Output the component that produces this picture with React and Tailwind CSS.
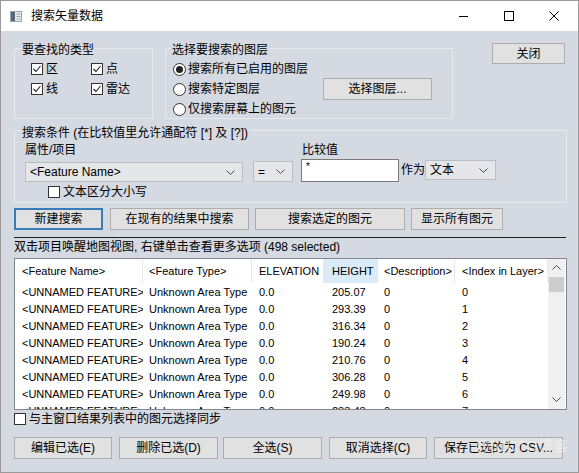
import React from 'react';

const bodyBg = 'bg-[#d4d9e2]';

const rows = [
  ['205.07', '0'],
  ['293.39', '1'],
  ['316.34', '2'],
  ['190.24', '3'],
  ['210.76', '4'],
  ['306.28', '5'],
  ['249.98', '6'],
  ['283.48', '7'],
];

const colW = ['w-[128px]', 'w-[109px]', 'w-[72px]', 'w-[54px]', 'w-[77px]', 'w-[93px]'];
const colPad = ['pl-[7px]', 'pl-[6px]', 'pl-[7px]', 'pl-[8px]', 'pl-[6px]', 'pl-[7px]'];
const headers = ['<Feature Name>', '<Feature Type>', 'ELEVATION', 'HEIGHT', '<Description>', '<Index in Layer>'];

function Chevron({ up }) {
  return (
    <svg width="9" height="5" viewBox="0 0 9 5" className="shrink-0">
      <polyline
        points={up ? '0.5,4.5 4.5,0.5 8.5,4.5' : '0.5,0.5 4.5,4.5 8.5,0.5'}
        fill="none"
        stroke="#4a4a4a"
        strokeWidth="1"
      />
    </svg>
  );
}

function CheckBox({ checked, label, className = '' }) {
  return (
    <div className={`flex items-center h-[16px] ${className}`}>
      <span className="w-[12px] h-[12px] border border-[#333] bg-white flex items-center justify-center shrink-0">
        {checked && (
          <svg width="10" height="10" viewBox="0 0 10 10">
            <polyline points="1.5,5 4,7.5 8.5,2" fill="none" stroke="#222" strokeWidth="1.1" />
          </svg>
        )}
      </span>
      <span className="ml-[3px] whitespace-nowrap">{label}</span>
    </div>
  );
}

function Radio({ checked, label }) {
  return (
    <div className="flex items-center h-[16px]">
      <span className="w-[13px] h-[13px] rounded-full border border-[#333] bg-white flex items-center justify-center shrink-0">
        {checked && <span className="w-[7px] h-[7px] rounded-full bg-[#222]" />}
      </span>
      <span className="ml-[2px] whitespace-nowrap">{label}</span>
    </div>
  );
}

function Btn({ children, className = '' }) {
  return (
    <div className={`h-[22px] bg-[#e1e1e1] border border-[#adadad] flex items-center justify-center whitespace-nowrap shrink-0 ${className}`}>
      {children}
    </div>
  );
}

function Select({ value, className = '' }) {
  return (
    <div className={`bg-[#e5e6e9] border border-[#b9bdc4] flex items-center justify-between pl-[4px] pr-[7px] shrink-0 ${className}`}>
      <span className="whitespace-nowrap">{value}</span>
      <Chevron />
    </div>
  );
}

function GroupLabel({ children, className = '' }) {
  return (
    <div className={`w-fit px-[1px] h-[16px] whitespace-nowrap ${bodyBg} ${className}`}>{children}</div>
  );
}

export default function App() {
  return (
    <div className={`relative w-[579px] h-[473px] overflow-hidden border border-[#9a9a9a] ${bodyBg} text-black text-[12px] leading-[16px] font-['Liberation_Sans','Noto_Sans_CJK_SC',sans-serif]`}>
      {/* title bar */}
      <div className="h-[30px] bg-white flex items-center">
        <svg width="12" height="11" viewBox="0 0 12 11" className="ml-[9px]">
          <rect x="0.5" y="0.5" width="11" height="10" fill="#e8ecef" stroke="#9aa4ad" />
          <rect x="1" y="1" width="4" height="9" fill="#56697c" />
          <line x1="6.5" y1="3" x2="10.5" y2="3" stroke="#9aa4ad" />
          <line x1="6.5" y1="5.5" x2="10.5" y2="5.5" stroke="#9aa4ad" />
          <line x1="6.5" y1="8" x2="10.5" y2="8" stroke="#9aa4ad" />
        </svg>
        <span className="ml-[9px] text-[12px]">搜索矢量数据</span>
        <div className="ml-auto flex h-full mr-[2px]">
          <div className="w-[45px] h-full flex items-center justify-center">
            <span className="w-[9px] h-[1px] bg-black" />
          </div>
          <div className="w-[45px] h-full flex items-center justify-center">
            <span className="w-[10px] h-[10px] border border-black" />
          </div>
          <div className="w-[45px] h-full flex items-center justify-center">
            <svg width="10" height="10" viewBox="0 0 10 10">
              <path d="M0.5 0.5 L9.5 9.5 M9.5 0.5 L0.5 9.5" stroke="#000" strokeWidth="1" />
            </svg>
          </div>
        </div>
      </div>

      <div className="pl-[13px] flex flex-col">
        {/* top row */}
        <div className="mt-[12px] flex items-start">
          <div className="mt-[5px] w-[139px] h-[71px] border border-[#e6e9ee] shrink-0">
            <GroupLabel className="-mt-[7px] ml-[6px]">要查找的类型</GroupLabel>
            <div className="mt-[3px] ml-[16px] grid grid-cols-[60px_60px] gap-y-[4px]">
              <CheckBox checked label="区" />
              <CheckBox checked label="点" />
              <CheckBox checked label="线" />
              <CheckBox checked label="雷达" />
            </div>
          </div>

          <div className="ml-[12px] mt-[5px] w-[288px] h-[71px] border border-[#e6e9ee] shrink-0">
            <GroupLabel className="-mt-[7px] ml-[5px]">选择要搜索的图层</GroupLabel>
            <div className="mt-[3px] flex items-start">
              <div className="ml-[7px] w-[150px] flex flex-col gap-[4px]">
                <Radio checked label="搜索所有已启用的图层" />
                <Radio label="搜索特定图层" />
                <Radio label="仅搜索屏幕上的图元" />
              </div>
              <Btn className="mt-[17px] w-[109px]">选择图层...</Btn>
            </div>
          </div>

          <Btn className="ml-[39px] w-[73px] !h-[21px]">关闭</Btn>
        </div>

        {/* search criteria */}
        <div className="mt-[11px] w-[553px] h-[73px] border border-[#e6e9ee]">
          <GroupLabel className="-mt-[6px] ml-[6px]">搜索条件 (在比较值里允许通配符 [*] 及 [?])</GroupLabel>
          <div className="mt-[1px] flex items-end">
            <div className="ml-[10px] flex flex-col">
              <span className="h-[16px]">属性/项目</span>
              <Select value="<Feature Name>" className="mt-[4px] w-[218px] h-[20px]" />
            </div>
            <Select value="=" className="ml-[10px] w-[40px] h-[21px]" />
            <div className="ml-[8px] flex flex-col">
              <span className="h-[16px] pl-[1px]">比较值</span>
              <div className="mt-[1px] w-[98px] h-[23px] bg-white border border-[#7a7a7a] pl-[4px] pt-[1px] text-[10px] leading-[12px]">*</div>
            </div>
            <div className="ml-[2px] mb-[2px] h-[20px] flex items-center">
              <span className="w-[24px]">作为</span>
              <Select value="文本" className="w-[71px] h-[20px]" />
            </div>
          </div>
          <CheckBox label="文本区分大小写" className="mt-[2px] ml-[33px]" />
        </div>

        {/* action buttons */}
        <div className="mt-[5px] flex">
          <div className="w-[89px] h-[22px] bg-[#e1e1e1] border-2 border-[#3a7cba] flex items-center justify-center">新建搜索</div>
          <Btn className="ml-[7px] w-[139px]">在现有的结果中搜索</Btn>
          <Btn className="ml-[6px] w-[150px]">搜索选定的图元</Btn>
          <Btn className="ml-[6px] w-[92px]">显示所有图元</Btn>
        </div>

        <div className="mt-[7px] w-[552px] h-[1px] bg-[#1e1e1e]" />

        <div className="mt-[1px] h-[16px] whitespace-nowrap">双击项目唤醒地图视图, 右键单击查看更多选项 (498 selected)</div>

        {/* results table */}
        <div className="mt-[3px] w-[553px] h-[152px] bg-white border border-[#828790] flex overflow-hidden text-[11px] leading-[14px]">
          <div className="w-[533px] flex flex-col">
            <div className="h-[24px] flex shrink-0">
              {headers.map((h, i) => (
                <div
                  key={h}
                  className={`${colW[i]} ${colPad[i]} h-full flex items-center whitespace-nowrap border-r border-[#e8e8e8] ${i === 3 ? 'bg-[#d9ebf9]' : ''}`}
                >
                  {h}
                </div>
              ))}
            </div>
            {rows.map(([height, idx]) => {
              const cells = ['<UNNAMED FEATURE>', 'Unknown Area Type', '0.0', height, '0', idx];
              return (
                <div key={idx} className="h-[17px] flex shrink-0">
                  {cells.map((c, i) => (
                    <div key={i} className={`${colW[i]} ${colPad[i]} h-full flex items-center whitespace-nowrap overflow-hidden`}>
                      {c}
                    </div>
                  ))}
                </div>
              );
            })}
          </div>
          <div className="w-[17px] h-full bg-[#f0f0f0] flex flex-col items-center">
            <div className="h-[17px] flex items-center justify-center">
              <Chevron up />
            </div>
            <div className="mt-[1px] w-[15px] h-[15px] bg-[#cdcdcd]" />
            <div className="mt-auto mb-[1px] h-[17px] flex items-center justify-center">
              <Chevron />
            </div>
          </div>
        </div>

        <CheckBox label="与主窗口结果列表中的图元选择同步" className="mt-[1px]" />

        <div className="mt-[10px] flex">
          <Btn className="w-[98px]">编辑已选(E)</Btn>
          <Btn className="ml-[7px] w-[99px]">删除已选(D)</Btn>
          <Btn className="ml-[5px] w-[99px]">全选(S)</Btn>
          <Btn className="ml-[7px] w-[98px]">取消选择(C)</Btn>
          <Btn className="ml-[7px] w-[129px]">保存已选的为 CSV...</Btn>
        </div>
      </div>

      <div className="absolute right-[10px] bottom-[17px] text-[15px] leading-[18px] text-[#f2f2f2]/70 whitespace-nowrap pointer-events-none">@51CTO博客</div>
    </div>
  );
}
